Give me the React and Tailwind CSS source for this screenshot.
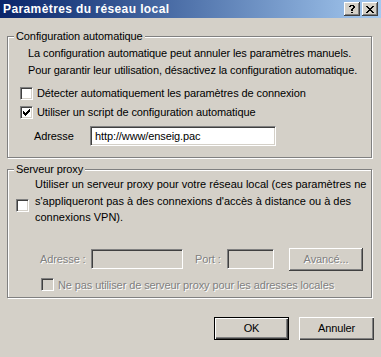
import React from "react";

const CHECK = [
  [6, 0], [5, 1], [6, 1], [0, 2], [4, 2], [5, 2], [6, 2],
  [0, 3], [1, 3], [3, 3], [4, 3], [5, 3],
  [0, 4], [1, 4], [2, 4], [3, 4], [4, 4],
  [1, 5], [2, 5], [3, 5], [2, 6],
];

const CROSS = [
  "XX....XX",
  ".XX..XX.",
  "..XXXX..",
  "...XX...",
  "..XXXX..",
  ".XX..XX.",
  "XX....XX",
];

const QMARK = [
  ".XXXX.",
  "XX..XX",
  "....XX",
  "...XX.",
  "..XX..",
  "..XX..",
  "......",
  "..XX..",
];

function Pixels({ rows }) {
  const w = rows[0].length;
  const h = rows.length;
  const rects = [];
  rows.forEach((row, y) =>
    row.split("").forEach((c, x) => {
      if (c === "X") rects.push(<rect key={x + "-" + y} x={x} y={y} width="1" height="1" />);
    })
  );
  return (
    <svg width={w} height={h} viewBox={`0 0 ${w} ${h}`} shapeRendering="crispEdges" fill="#000">
      {rects}
    </svg>
  );
}

function Checkbox({ checked, disabled }) {
  return (
    <div
      className={
        "w-[13px] h-[13px] shrink-0 flex items-center justify-center border border-t-[#808080] border-l-[#808080] border-b-white border-r-white shadow-[inset_1px_1px_0_#404040,inset_-1px_-1px_0_#d4d0c8] " +
        (disabled ? "bg-[#d4d0c8]" : "bg-white")
      }
    >
      {checked && (
        <svg width="7" height="7" viewBox="0 0 7 7" shapeRendering="crispEdges" fill="#000">
          {CHECK.map(([x, y]) => (
            <rect key={x + "-" + y} x={x} y={y} width="1" height="1" />
          ))}
        </svg>
      )}
    </div>
  );
}

function Field({ className, value, disabled }) {
  return (
    <div
      className={
        "h-[20px] shrink-0 flex items-center pl-[4px] border border-t-[#808080] border-l-[#808080] border-b-white border-r-white shadow-[inset_1px_1px_0_#404040,inset_-1px_-1px_0_#d4d0c8] " +
        (disabled ? "bg-[#d4d0c8] " : "bg-white ") +
        className
      }
    >
      {value}
    </div>
  );
}

function Group({ title, className, children }) {
  return (
    <div
      className={
        "relative border border-[#808080] shadow-[inset_1px_1px_0_#fff,1px_1px_0_#fff] " + className
      }
    >
      <div className="absolute left-[6px] top-[-7px] px-[2px] bg-[#d4d0c8] leading-[13px]">{title}</div>
      {children}
    </div>
  );
}

const disabledText = "text-[#808080] [text-shadow:1px_1px_0_#fff]";

export default function App() {
  return (
    <div className="w-[381px] h-[357px] bg-[#d4d0c8] overflow-hidden text-[11px] tracking-[-0.1px] text-black font-['Liberation_Sans',Arial,sans-serif]">
      <div className="h-[18px] flex items-center bg-gradient-to-r from-[#0a246a] to-[#a6caf0] pl-[3px] pr-[3px]">
        <span className="flex-1 text-white font-bold text-[12px] tracking-[0.4px] leading-[18px]">Paramètres du réseau local</span>
        <div className="w-[16px] h-[14px] flex items-center justify-center bg-[#d4d0c8] shadow-[inset_-1px_-1px_0_#404040,inset_1px_1px_0_#fff,inset_-2px_-2px_0_#808080]">
          <Pixels rows={QMARK} />
        </div>
        <div className="ml-[2px] w-[16px] h-[14px] flex items-center justify-center bg-[#d4d0c8] shadow-[inset_-1px_-1px_0_#404040,inset_1px_1px_0_#fff,inset_-2px_-2px_0_#808080]">
          <Pixels rows={CROSS} />
        </div>
      </div>

      <div className="px-[7px] pt-[18px]">
        <Group title="Configuration automatique" className="h-[122px] w-[365px]">
          <div className="pl-[20px] pt-[8px] leading-[17px]">
            <div>La configuration automatique peut annuler les paramètres manuels.</div>
            <div>Pour garantir leur utilisation, désactivez la configuration automatique.</div>
          </div>
          <div className="mt-[5px] h-[19px] pl-[12px] flex items-center gap-[4px]">
            <Checkbox />
            <span>Détecter automatiquement les paramètres de connexion</span>
          </div>
          <div className="h-[19px] pl-[12px] flex items-center gap-[4px]">
            <Checkbox checked />
            <span>Utiliser un script de configuration automatique</span>
          </div>
          <div className="mt-[4px] pl-[26px] flex items-center">
            <span className="w-[56px]">Adresse</span>
            <Field className="w-[186px]" value="http://www/enseig.pac" />
          </div>
        </Group>

        <Group title="Serveur proxy" className="mt-[11px] h-[129px] w-[365px]">
          <div className="pl-[8px] pt-[6px] flex items-start gap-[6px]">
            <div className="mt-[23px]">
              <Checkbox />
            </div>
            <div className="leading-[16.5px] tracking-normal">
              <div>Utiliser un serveur proxy pour votre réseau local (ces paramètres ne</div>
              <div>s'appliqueront pas à des connexions d'accès à distance ou à des</div>
              <div>connexions VPN).</div>
            </div>
          </div>
          <div className="mt-[22px] pl-[32px] flex items-center">
            <span className={"w-[51px] " + disabledText}>Adresse :</span>
            <Field className="w-[92px]" disabled />
            <span className={"ml-[12px] w-[32px] " + disabledText}>Port :</span>
            <Field className="w-[47px]" disabled />
            <div className={"ml-[15px] w-[74px] h-[23px] flex items-center justify-center shadow-[inset_-1px_-1px_0_#404040,inset_1px_1px_0_#fff,inset_-2px_-2px_0_#808080] " + disabledText}>
              Avancé...
            </div>
          </div>
          <div className="mt-[6px] pl-[33px] flex items-center gap-[4px]">
            <Checkbox disabled />
            <span className={disabledText}>Ne pas utiliser de serveur proxy pour les adresses locales</span>
          </div>
        </Group>

        <div className="mt-[19px] flex justify-end gap-[10px] pr-0">
          <div className="w-[75px] h-[23px] flex items-center justify-center border border-black shadow-[inset_1px_1px_0_#fff,inset_-1px_-1px_0_#404040,inset_-2px_-2px_0_#808080]">
            OK
          </div>
          <div className="w-[75px] h-[23px] flex items-center justify-center shadow-[inset_1px_1px_0_#fff,inset_-1px_-1px_0_#404040,inset_-2px_-2px_0_#808080]">
            Annuler
          </div>
        </div>
      </div>
    </div>
  );
}
